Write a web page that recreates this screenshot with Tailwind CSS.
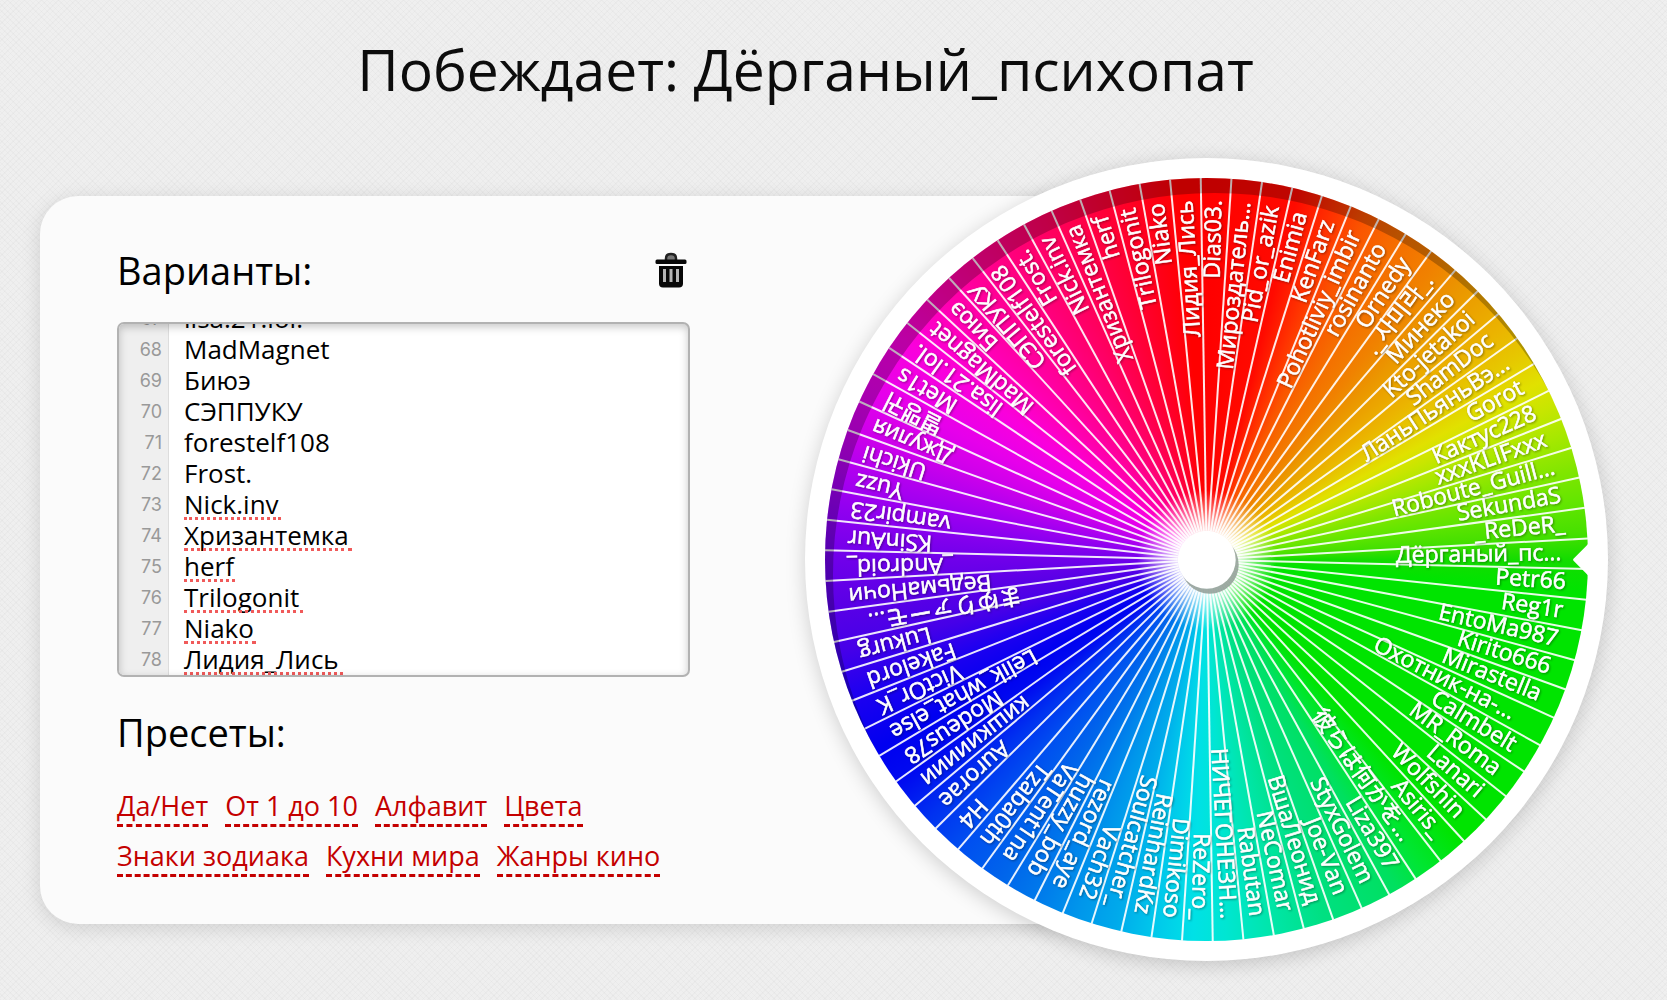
<!DOCTYPE html>
<html lang="ru">
<head>
<meta charset="utf-8">
<meta name="viewport" content="width=device-width, initial-scale=1">
<title>Колесо случайного выбора</title>
<script src="https://cdn.jsdelivr.net/npm/@tailwindcss/browser@4"></script>
</head>
<body class="min-h-screen overflow-x-hidden bg-[#efefef] bg-[repeating-linear-gradient(45deg,rgb(0_0_0/0.02)_0_1px,transparent_1px_4px),repeating-linear-gradient(-45deg,rgb(0_0_0/0.02)_0_1px,transparent_1px_4px)] font-['Open_Sans','Noto_Sans_CJK_JP','Noto_Sans_CJK_KR',sans-serif] text-black">

<header class="pt-[33px] pr-14 text-center">
  <h1 class="text-[57px] leading-[72px] text-[#0c0c0c]">Побеждает: Дёрганый_психопат</h1>
</header>

<main class="mt-[53px] mr-[59px] ml-10 flex items-center">
  <section class="-mr-[24vw] flex-1 rounded-[38px] bg-[#fbfbfb] pt-[50px] pb-[47px] pl-[77px] shadow-[0_4px_20px_rgb(0_0_0/0.13)]">
    <div class="w-[573px]">
      <div class="flex items-center justify-between">
        <label for="variants" class="text-[38px] leading-12">Варианты:</label>
        <button type="button" aria-label="Очистить" class="mr-[3px]">
          <svg class="h-9 w-8" viewBox="0 0 32 36">
            <path d="M11 8V6.500Q11 2 16 2T21 6.500V8" fill="#777" stroke="#222" stroke-width="2.500"/>
            <rect x="0.500" y="7.500" width="31" height="4.500" rx="1.500" fill="#080808"/>
            <path d="M4 14H28V31.500Q28 35.500 24 35.500H8Q4 35.500 4 31.500Z" fill="#080808"/>
            <path d="M9.500 17V30M16 17V30M22.500 17V30" stroke="#b5b5b5" stroke-width="3"/>
          </svg>
        </button>
      </div>

      <div class="relative mt-7 flex h-[355px] items-end overflow-hidden rounded-[7px] border-2 border-[#b2b2b2] bg-white">
        <div id="gutter" aria-hidden="true" class="w-[50px] shrink-0 border-r border-[#dddddd] bg-[#efefef] pr-[6px] text-right font-[Inter,sans-serif] text-[18px] leading-[31px] text-[#999999]"></div>
        <div class="relative flex-1">
          <textarea id="variants" rows="12" spellcheck="false" class="block w-full resize-none overflow-hidden pl-[15px] text-[26px] leading-[31px] outline-none">lisa.21.lol.
MadMagnet
Биюэ
СЭППУКУ
forestelf108
Frost.
Nick.inv
Хризантемка
herf
Trilogonit
Niako
Лидия_Лись</textarea>
          <div aria-hidden="true" class="pointer-events-none absolute bottom-0 left-[15px] grid auto-rows-[31px] *:border-b-3 *:border-dotted *:border-[#f05a5a]">
            <i class="w-[97px]"></i>
            <i class="w-[168px]"></i>
            <i class="w-[51px]"></i>
            <i class="w-[119px]"></i>
            <i class="w-[72px]"></i>
            <i class="w-[159px]"></i>
          </div>
        </div>
        <div class="pointer-events-none absolute inset-0 shadow-[inset_0_3px_9px_rgb(0_0_0/0.22)]"></div>
      </div>

      <h2 class="mt-[31px] text-[38px] leading-12">Пресеты:</h2>
      <nav class="mt-8 flex flex-wrap gap-x-[17px] gap-y-[11px] text-[27px] leading-9 text-[#c40000]">
        <a href="#" class="border-b-3 border-dashed border-[#c40000]">Да/Нет</a>
        <a href="#" class="border-b-3 border-dashed border-[#c40000]">От 1 до 10</a>
        <a href="#" class="border-b-3 border-dashed border-[#c40000]">Алфавит</a>
        <a href="#" class="border-b-3 border-dashed border-[#c40000]">Цвета</a>
        <a href="#" class="border-b-3 border-dashed border-[#c40000]">Знаки зодиака</a>
        <a href="#" class="border-b-3 border-dashed border-[#c40000]">Кухни мира</a>
        <a href="#" class="border-b-3 border-dashed border-[#c40000]">Жанры кино</a>
      </nav>
    </div>
  </section>

  <div class="relative aspect-square w-[48.2vw] shrink-0 rounded-full bg-white shadow-[0_4px_20px_rgb(0_0_0/0.18)]">
    <div id="disc" class="absolute inset-[2.5%] rounded-full"></div>
    <svg class="absolute inset-0 size-full" viewBox="-402 -402 804 804">
      <defs>
        <radialGradient id="glow" gradientUnits="userSpaceOnUse" cx="0" cy="0" r="70">
          <stop offset="0.400" stop-color="#fff" stop-opacity="0.850"/>
          <stop offset="1" stop-color="#fff" stop-opacity="0"/>
        </radialGradient>
      </defs>
      <g id="lines" stroke="#fff" stroke-opacity="0.900" stroke-width="2"></g>
      <g id="names" class="fill-white text-[23px] [filter:drop-shadow(1px_1px_1px_rgb(0_0_0/0.35))]" stroke="#fff" stroke-width="0.600" text-anchor="end"></g>
      <circle r="70" fill="url(#glow)"/>
      <circle cx="3" cy="5" r="29" fill="#8a968f" fill-opacity="0.800"/>
      <circle r="29" fill="#fff"/>
    </svg>
    <div class="absolute inset-[2.5%] rounded-full shadow-[inset_8px_15px_0_rgb(0_0_0/0.25)]"></div>
    <svg class="absolute inset-0 size-full" viewBox="-402 -402 804 804">
      <path d="M385 -20Q383 -17 379 -13L367 -1Q366 0 367 1L379 13Q383 17 385 20Z" fill="#fff"/>
    </svg>
  </div>
</main>

<script>
const names = ["Dias03.", "Мироздатель...", "Pid_or_azik", "Enimia", "KenFarz", "Pohotliviy_imbir", "rosinanto", "Ornedy", "._사미라_.", "Минеко", "Kto-jetakoi", "ShamDoc", "ЛаньПьяньВэ...", "Gorot", "Кактус228", "xxxKLIFxxx", "Roboute_Guill...", "SekundaS", "_ReDeR_", "Дёрганый_пс...", "Petr66", "Reg1r", "EntoMa987", "Kirito666", "Mirastella", "Охотник-на-...", "Calmbelt", "MR_Roma", "Lanari", "Wolfshin", "Asiris_", "彼らは何かを...", "Liza397", "StyxGolem", "Joe-Van", "ВшаЛеонид", "NeComar", "Rabutan", "НИЧЕГОНЕЗН...", "ReZero_", "Dimikoso", "ReinhardKz", "Soulcatcher_", "Vach32", "rezord_aye", "huzzy_bob", "VaTent1na", "Tzaba0th", "H4", "Aurorae", "кишкиииии", "Modeus78", "Lelik_what_else", "VictOr_K", "Fakelord", "Lukurg", "まゆりァーモ...", "ВедьмаНочи", "_Android_", "KSinAur", "vampir23", "Yuzz", "Ukichi", "Джулия", "별맹귀", "Met1s", "lisa.21.lol.", "MadMagnet", "Биюэ", "СЭППУКУ", "forestelf108", "Frost.", "Nick.inv", "Хризантемка", "herf", "Trilogonit", "Niako", "Лидия_Лись"];

const stops = [["#ff0000", 0], ["#ff0a00", 14], ["#ff3200", 20], ["#fa5500", 25], ["#f56e00", 31], ["#f08200", 38], ["#eb9600", 43], ["#ebb400", 52], ["#e6c800", 57], ["#e1e100", 62], ["#c8e600", 66], ["#a5e800", 71], ["#82e600", 76], ["#64e600", 81], ["#46e000", 86], ["#14dc00", 90], ["#00e400", 95], ["#00e400", 138], ["#00e632", 145], ["#00e05f", 150], ["#00e082", 162], ["#00e6aa", 170], ["#00e6d2", 177], ["#00e1e6", 182], ["#00c8eb", 188], ["#00aaeb", 194], ["#0096eb", 200], ["#0078eb", 207], ["#0064eb", 213], ["#0050f0", 220], ["#0032f0", 227], ["#000af0", 234], ["#0000f0", 240], ["#1e00f0", 249], ["#4600e8", 256], ["#5a00e6", 263], ["#7300eb", 271], ["#9100f0", 278], ["#aa00f0", 283], ["#cd00eb", 290], ["#e600eb", 297], ["#fa00dc", 306], ["#ff00b4", 314], ["#ff0082", 326], ["#ff0055", 337], ["#ff0028", 347], ["#ff0000", 356], ["#ff0000", 360]];
document.getElementById("disc").style.backgroundImage = "conic-gradient(" + stops.map(s => s[0] + " " + s[1] + "deg").join(",") + ")";

const svgNS = "http://www.w3.org/2000/svg";
const step = 360 / names.length;
const start = -0.9;
const ends = { 19: 355, 25: 344, 31: 344, 56: 344 };
names.forEach((name, i) => {
  const line = document.createElementNS(svgNS, "line");
  line.setAttribute("x1", 29);
  line.setAttribute("x2", 382);
  line.setAttribute("transform", "rotate(" + (start + i * step - 90) + ")");
  document.getElementById("lines").append(line);
  const text = document.createElementNS(svgNS, "text");
  text.setAttribute("x", ends[i] || 360);
  text.setAttribute("y", 6);
  text.setAttribute("transform", "rotate(" + (start + (i + 0.5) * step - 90) + ")");
  text.textContent = name;
  document.getElementById("names").append(text);
});

const gutter = document.getElementById("gutter");
for (let n = 67; n <= 78; n++) {
  const number = document.createElement("div");
  number.textContent = n;
  gutter.append(number);
}
</script>
</body>
</html>
